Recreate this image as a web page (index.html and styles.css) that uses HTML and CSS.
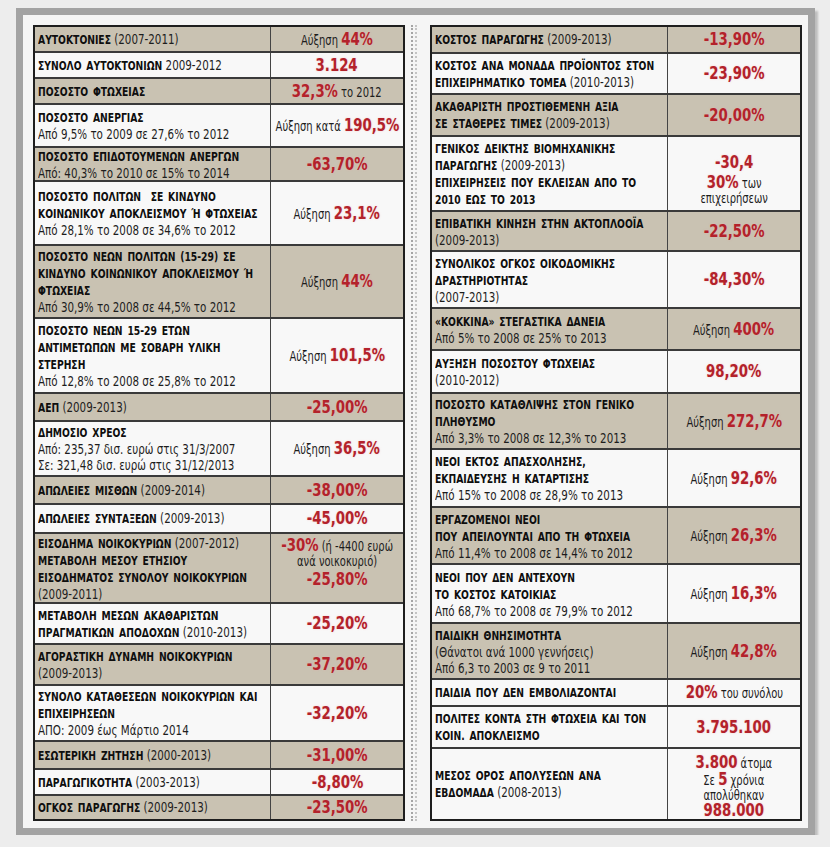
FILE: index.html
```html
<!DOCTYPE html>
<html lang="el">
<head>
<meta charset="utf-8">
<title>Στατιστικά κρίσης</title>
<link rel="stylesheet" href="styles.css">
</head>
<body>
<div class="panel">
  <div class="table table-left">
    <div class="row tan"><div class="label"><div><b>ΑΥΤΟΚΤΟΝΙΕΣ</b> (2007-2011)</div></div><div class="value"><div>Αύξηση <span class="red">44%</span></div></div></div>
    <div class="row"><div class="label"><div><b>ΣΥΝΟΛΟ ΑΥΤΟΚΤΟΝΙΩΝ</b> 2009-2012</div></div><div class="value"><div><span class="red">3.124</span></div></div></div>
    <div class="row tan"><div class="label"><div><b>ΠΟΣΟΣΤΟ ΦΤΩΧΕΙΑΣ</b></div></div><div class="value"><div><span class="red">32,3%</span> το 2012</div></div></div>
    <div class="row"><div class="label"><div><b>ΠΟΣΟΣΤΟ ΑΝΕΡΓΙΑΣ</b><br>Από 9,5% το 2009 σε 27,6% το 2012</div></div><div class="value"><div>Αύξηση κατά <span class="red">190,5%</span></div></div></div>
    <div class="row tan"><div class="label"><div><b>ΠΟΣΟΣΤΟ ΕΠΙΔΟΤΟΥΜΕΝΩΝ ΑΝΕΡΓΩΝ</b><br>Από: 40,3% το 2010 σε 15% το 2014</div></div><div class="value"><div><span class="red">-63,70%</span></div></div></div>
    <div class="row"><div class="label"><div><b>ΠΟΣΟΣΤΟ ΠΟΛΙΤΩΝ&nbsp; ΣΕ ΚΙΝΔΥΝΟ<br>ΚΟΙΝΩΝΙΚΟΥ ΑΠΟΚΛΕΙΣΜΟΥ Ή ΦΤΩΧΕΙΑΣ</b><br>Από 28,1% το 2008 σε 34,6% το 2012</div></div><div class="value"><div>Αύξηση <span class="red">23,1%</span></div></div></div>
    <div class="row tan"><div class="label"><div><b>ΠΟΣΟΣΤΟ ΝΕΩΝ ΠΟΛΙΤΩΝ (15-29) ΣΕ<br>ΚΙΝΔΥΝΟ ΚΟΙΝΩΝΙΚΟΥ ΑΠΟΚΛΕΙΣΜΟΥ Ή<br>ΦΤΩΧΕΙΑΣ</b><br>Από 30,9% το 2008 σε 44,5% το 2012</div></div><div class="value"><div>Αύξηση <span class="red">44%</span></div></div></div>
    <div class="row"><div class="label"><div><b>ΠΟΣΟΣΤΟ ΝΕΩΝ 15-29 ΕΤΩΝ<br>ΑΝΤΙΜΕΤΩΠΩΝ ΜΕ ΣΟΒΑΡΗ ΥΛΙΚΗ<br>ΣΤΕΡΗΣΗ</b><br>Από 12,8% το 2008 σε 25,8% το 2012</div></div><div class="value"><div>Αύξηση <span class="red">101,5%</span></div></div></div>
    <div class="row tan"><div class="label"><div><b>ΑΕΠ</b> (2009-2013)</div></div><div class="value"><div><span class="red">-25,00%</span></div></div></div>
    <div class="row"><div class="label"><div><b>ΔΗΜΟΣΙΟ ΧΡΕΟΣ</b><br>Από: 235,37 δισ. ευρώ στις 31/3/2007<br>Σε: 321,48 δισ. ευρώ στις 31/12/2013</div></div><div class="value"><div>Αύξηση <span class="red">36,5%</span></div></div></div>
    <div class="row tan"><div class="label"><div><b>ΑΠΩΛΕΙΕΣ ΜΙΣΘΩΝ</b> (2009-2014)</div></div><div class="value"><div><span class="red">-38,00%</span></div></div></div>
    <div class="row"><div class="label"><div><b>ΑΠΩΛΕΙΕΣ ΣΥΝΤΑΞΕΩΝ</b> (2009-2013)</div></div><div class="value"><div><span class="red">-45,00%</span></div></div></div>
    <div class="row tan"><div class="label"><div><b>ΕΙΣΟΔΗΜΑ ΝΟΙΚΟΚΥΡΙΩΝ</b> (2007-2012)<br><b>ΜΕΤΑΒΟΛΗ ΜΕΣΟΥ ΕΤΗΣΙΟΥ<br>ΕΙΣΟΔΗΜΑΤΟΣ ΣΥΝΟΛΟΥ ΝΟΙΚΟΚΥΡΙΩΝ</b><br>(2009-2011)</div></div><div class="value value-up"><div class="stack"><div><span class="red">-30%</span> (ή -4400 ευρώ</div><div>ανά νοικοκυριό)</div><div><span class="red">-25,80%</span></div></div></div></div>
    <div class="row"><div class="label"><div><b>ΜΕΤΑΒΟΛΗ ΜΕΣΩΝ ΑΚΑΘΑΡΙΣΤΩΝ<br>ΠΡΑΓΜΑΤΙΚΩΝ ΑΠΟΔΟΧΩΝ</b> (2010-2013)</div></div><div class="value"><div><span class="red">-25,20%</span></div></div></div>
    <div class="row tan"><div class="label"><div><b>ΑΓΟΡΑΣΤΙΚΗ ΔΥΝΑΜΗ ΝΟΙΚΟΚΥΡΙΩΝ</b><br>(2009-2013)</div></div><div class="value"><div><span class="red">-37,20%</span></div></div></div>
    <div class="row"><div class="label"><div><b>ΣΥΝΟΛΟ ΚΑΤΑΘΕΣΕΩΝ ΝΟΙΚΟΚΥΡΙΩΝ ΚΑΙ<br>ΕΠΙΧΕΙΡΗΣΕΩΝ</b><br>ΑΠΟ: 2009 έως Μάρτιο 2014</div></div><div class="value"><div><span class="red">-32,20%</span></div></div></div>
    <div class="row tan"><div class="label"><div><b>ΕΣΩΤΕΡΙΚΗ ΖΗΤΗΣΗ</b> (2000-2013)</div></div><div class="value"><div><span class="red">-31,00%</span></div></div></div>
    <div class="row"><div class="label"><div><b>ΠΑΡΑΓΩΓΙΚΟΤΗΤΑ</b> (2003-2013)</div></div><div class="value"><div><span class="red">-8,80%</span></div></div></div>
    <div class="row tan"><div class="label"><div><b>ΟΓΚΟΣ ΠΑΡΑΓΩΓΗΣ</b> (2009-2013)</div></div><div class="value"><div><span class="red">-23,50%</span></div></div></div>
  </div>

  <div class="sep"></div>

  <div class="table table-right">
    <div class="row tan"><div class="label"><div><b>ΚΟΣΤΟΣ ΠΑΡΑΓΩΓΗΣ</b> (2009-2013)</div></div><div class="value"><div><span class="red">-13,90%</span></div></div></div>
    <div class="row"><div class="label"><div><b>ΚΟΣΤΟΣ ΑΝΑ ΜΟΝΑΔΑ ΠΡΟΪΟΝΤΟΣ ΣΤΟΝ<br>ΕΠΙΧΕΙΡΗΜΑΤΙΚΟ ΤΟΜΕΑ</b> (2010-2013)</div></div><div class="value"><div><span class="red">-23,90%</span></div></div></div>
    <div class="row tan"><div class="label"><div><b>ΑΚΑΘΑΡΙΣΤΗ ΠΡΟΣΤΙΘΕΜΕΝΗ ΑΞΙΑ<br>ΣΕ ΣΤΑΘΕΡΕΣ ΤΙΜΕΣ</b> (2009-2013)</div></div><div class="value"><div><span class="red">-20,00%</span></div></div></div>
    <div class="row"><div class="label"><div><b>ΓΕΝΙΚΟΣ ΔΕΙΚΤΗΣ ΒΙΟΜΗΧΑΝΙΚΗΣ<br>ΠΑΡΑΓΩΓΗΣ</b> (2009-2013)<br><b>ΕΠΙΧΕΙΡΗΣΕΙΣ ΠΟΥ ΕΚΛΕΙΣΑΝ ΑΠΟ ΤΟ<br>2010 ΕΩΣ ΤΟ 2013</b></div></div><div class="value value-down"><div class="stack stack-firms"><div><span class="red">-30,4</span></div><div><span class="red">30%</span> των</div><div>επιχειρήσεων</div></div></div></div>
    <div class="row tan"><div class="label"><div><b>ΕΠΙΒΑΤΙΚΗ ΚΙΝΗΣΗ ΣΤΗΝ ΑΚΤΟΠΛΟΟΪΑ</b><br>(2009-2013)</div></div><div class="value"><div><span class="red">-22,50%</span></div></div></div>
    <div class="row"><div class="label"><div><b>ΣΥΝΟΛΙΚΟΣ ΟΓΚΟΣ ΟΙΚΟΔΟΜΙΚΗΣ<br>ΔΡΑΣΤΗΡΙΟΤΗΤΑΣ</b><br>(2007-2013)</div></div><div class="value"><div><span class="red">-84,30%</span></div></div></div>
    <div class="row tan"><div class="label"><div><b>«ΚΟΚΚΙΝΑ» ΣΤΕΓΑΣΤΙΚΑ ΔΑΝΕΙΑ</b><br>Από 5% το 2008 σε 25% το 2013</div></div><div class="value"><div>Αύξηση <span class="red">400%</span></div></div></div>
    <div class="row"><div class="label"><div><b>ΑΥΞΗΣΗ ΠΟΣΟΣΤΟΥ ΦΤΩΧΕΙΑΣ</b><br>(2010-2012)</div></div><div class="value"><div><span class="red">98,20%</span></div></div></div>
    <div class="row tan"><div class="label"><div><b>ΠΟΣΟΣΤΟ ΚΑΤΑΘΛΙΨΗΣ ΣΤΟΝ ΓΕΝΙΚΟ<br>ΠΛΗΘΥΣΜΟ</b><br>Από 3,3% το 2008 σε 12,3% το 2013</div></div><div class="value"><div>Αύξηση <span class="red">272,7%</span></div></div></div>
    <div class="row"><div class="label"><div><b>ΝΕΟΙ ΕΚΤΟΣ ΑΠΑΣΧΟΛΗΣΗΣ,<br>ΕΚΠΑΙΔΕΥΣΗΣ Η ΚΑΤΑΡΤΙΣΗΣ</b><br>Από 15% το 2008 σε 28,9% το 2013</div></div><div class="value"><div>Αύξηση <span class="red">92,6%</span></div></div></div>
    <div class="row tan"><div class="label"><div><b>ΕΡΓΑΖΟΜΕΝΟΙ ΝΕΟΙ<br>ΠΟΥ ΑΠΕΙΛΟΥΝΤΑΙ ΑΠΟ ΤΗ ΦΤΩΧΕΙΑ</b><br>Από 11,4% το 2008 σε 14,4% το 2012</div></div><div class="value"><div>Αύξηση <span class="red">26,3%</span></div></div></div>
    <div class="row"><div class="label"><div><b>ΝΕΟΙ ΠΟΥ ΔΕΝ ΑΝΤΕΧΟΥΝ<br>ΤΟ ΚΟΣΤΟΣ ΚΑΤΟΙΚΙΑΣ</b><br>Από 68,7% το 2008 σε 79,9% το 2012</div></div><div class="value"><div>Αύξηση <span class="red">16,3%</span></div></div></div>
    <div class="row tan"><div class="label"><div><b>ΠΑΙΔΙΚΗ ΘΝΗΣΙΜΟΤΗΤΑ</b><br>(Θάνατοι ανά 1000 γεννήσεις)<br>Από 6,3 το 2003 σε 9 το 2011</div></div><div class="value"><div>Αύξηση <span class="red">42,8%</span></div></div></div>
    <div class="row"><div class="label"><div><b>ΠΑΙΔΙΑ ΠΟΥ ΔΕΝ ΕΜΒΟΛΙΑΖΟΝΤΑΙ</b></div></div><div class="value"><div><span class="red">20%</span> του συνόλου</div></div></div>
    <div class="row"><div class="label"><div><b>ΠΟΛΙΤΕΣ ΚΟΝΤΑ ΣΤΗ ΦΤΩΧΕΙΑ ΚΑΙ ΤΟΝ<br>ΚΟΙΝ. ΑΠΟΚΛΕΙΣΜΟ</b></div></div><div class="value"><div><span class="red">3.795.100</span></div></div></div>
    <div class="row"><div class="label"><div><b>ΜΕΣΟΣ ΟΡΟΣ ΑΠΟΛΥΣΕΩΝ ΑΝΑ<br>ΕΒΔΟΜΑΔΑ</b> (2008-2013)</div></div><div class="value"><div class="stack stack-layoffs"><div><span class="red">3.800</span> άτομα</div><div>Σε <span class="red">5</span> χρόνια</div><div>απολύθηκαν</div><div class="tight"><span class="red">988.000</span></div></div></div></div>
  </div>
</div>
</body>
</html>
```

FILE: styles.css
```css
html, body {
  margin: 0;
  padding: 0;
}

body {
  background: #ededed;
  font-family: "DejaVu Sans Condensed", "DejaVu Sans", "Liberation Sans", sans-serif;
  color: #1c1c1c;
}

.panel {
  margin: 8px 0 0 16px;
  width: 769px;
  border: 7px solid #a3a3a3;
  padding: 10px 6px 7px 10px;
  background: #f5f5f5;
  display: grid;
  grid-template-columns: 372px 25px 372px;
  box-shadow: 3px 3px 2px rgba(0, 0, 0, 0.2);
}

.table {
  height: 796px;
  box-sizing: border-box;
  border: 2px solid #1e1e1e;
  display: grid;
}

.table-left {
  grid-template-rows: 24px 26px 26px 43px 34px 64px 73px 75px 28px 55px 28px 29px 70px 41px 41px 56px 28px 26px 25px;
}

.table-right {
  grid-template-rows: 25px 41px 42px 75px 40px 57px 42px 43px 56px 58px 57px 59px 56px 27px 42px 72px;
}

.row {
  display: grid;
  grid-template-columns: 235px 1fr;
  box-sizing: border-box;
  border-top: 2px solid #3a3a3a;
  background: #f8f8f8;
  min-height: 0;
}

.row:first-child {
  border-top: 0;
}

.row.tan {
  background: #c9c2b2;
}

.label {
  display: flex;
  align-items: center;
  padding: 0 3px;
  font-size: 14px;
  line-height: 16px;
  white-space: nowrap;
  color: #1d1d1d;
  overflow: hidden;
  min-width: 0;
}

.label > div {
  transform: scaleX(0.82);
  transform-origin: 0 50%;
}

.label b {
  font-weight: 700;
  font-size: 12.5px;
  color: #0e0e0e;
  word-spacing: 2px;
}

.value {
  border-left: 1px solid #444;
  display: flex;
  align-items: center;
  justify-content: center;
  text-align: center;
  font-size: 13.5px;
  line-height: 16px;
  white-space: nowrap;
  color: #1d1d1d;
  min-width: 0;
}

.value > div {
  transform: scaleX(0.82);
  transform-origin: 50% 50%;
}

.value-up {
  padding-bottom: 14px;
}

.value-down {
  padding-top: 12px;
}

.stack > div {
  height: 17px;
  line-height: 17px;
}

.stack-firms > div:first-child {
  height: 20px;
}

.stack-layoffs > div.tight {
  height: 11px;
  line-height: 11px;
}

.red {
  color: #b3222b;
  font-weight: 700;
  font-size: 18px;
  text-shadow: 0 0 2px rgba(240, 170, 170, 0.6);
}

.sep {
  margin-left: 6px;
  width: 2px;
  border-left: 2px dotted #a5a5a5;
  border-right: 2px dotted #c4c4c4;
}
```
